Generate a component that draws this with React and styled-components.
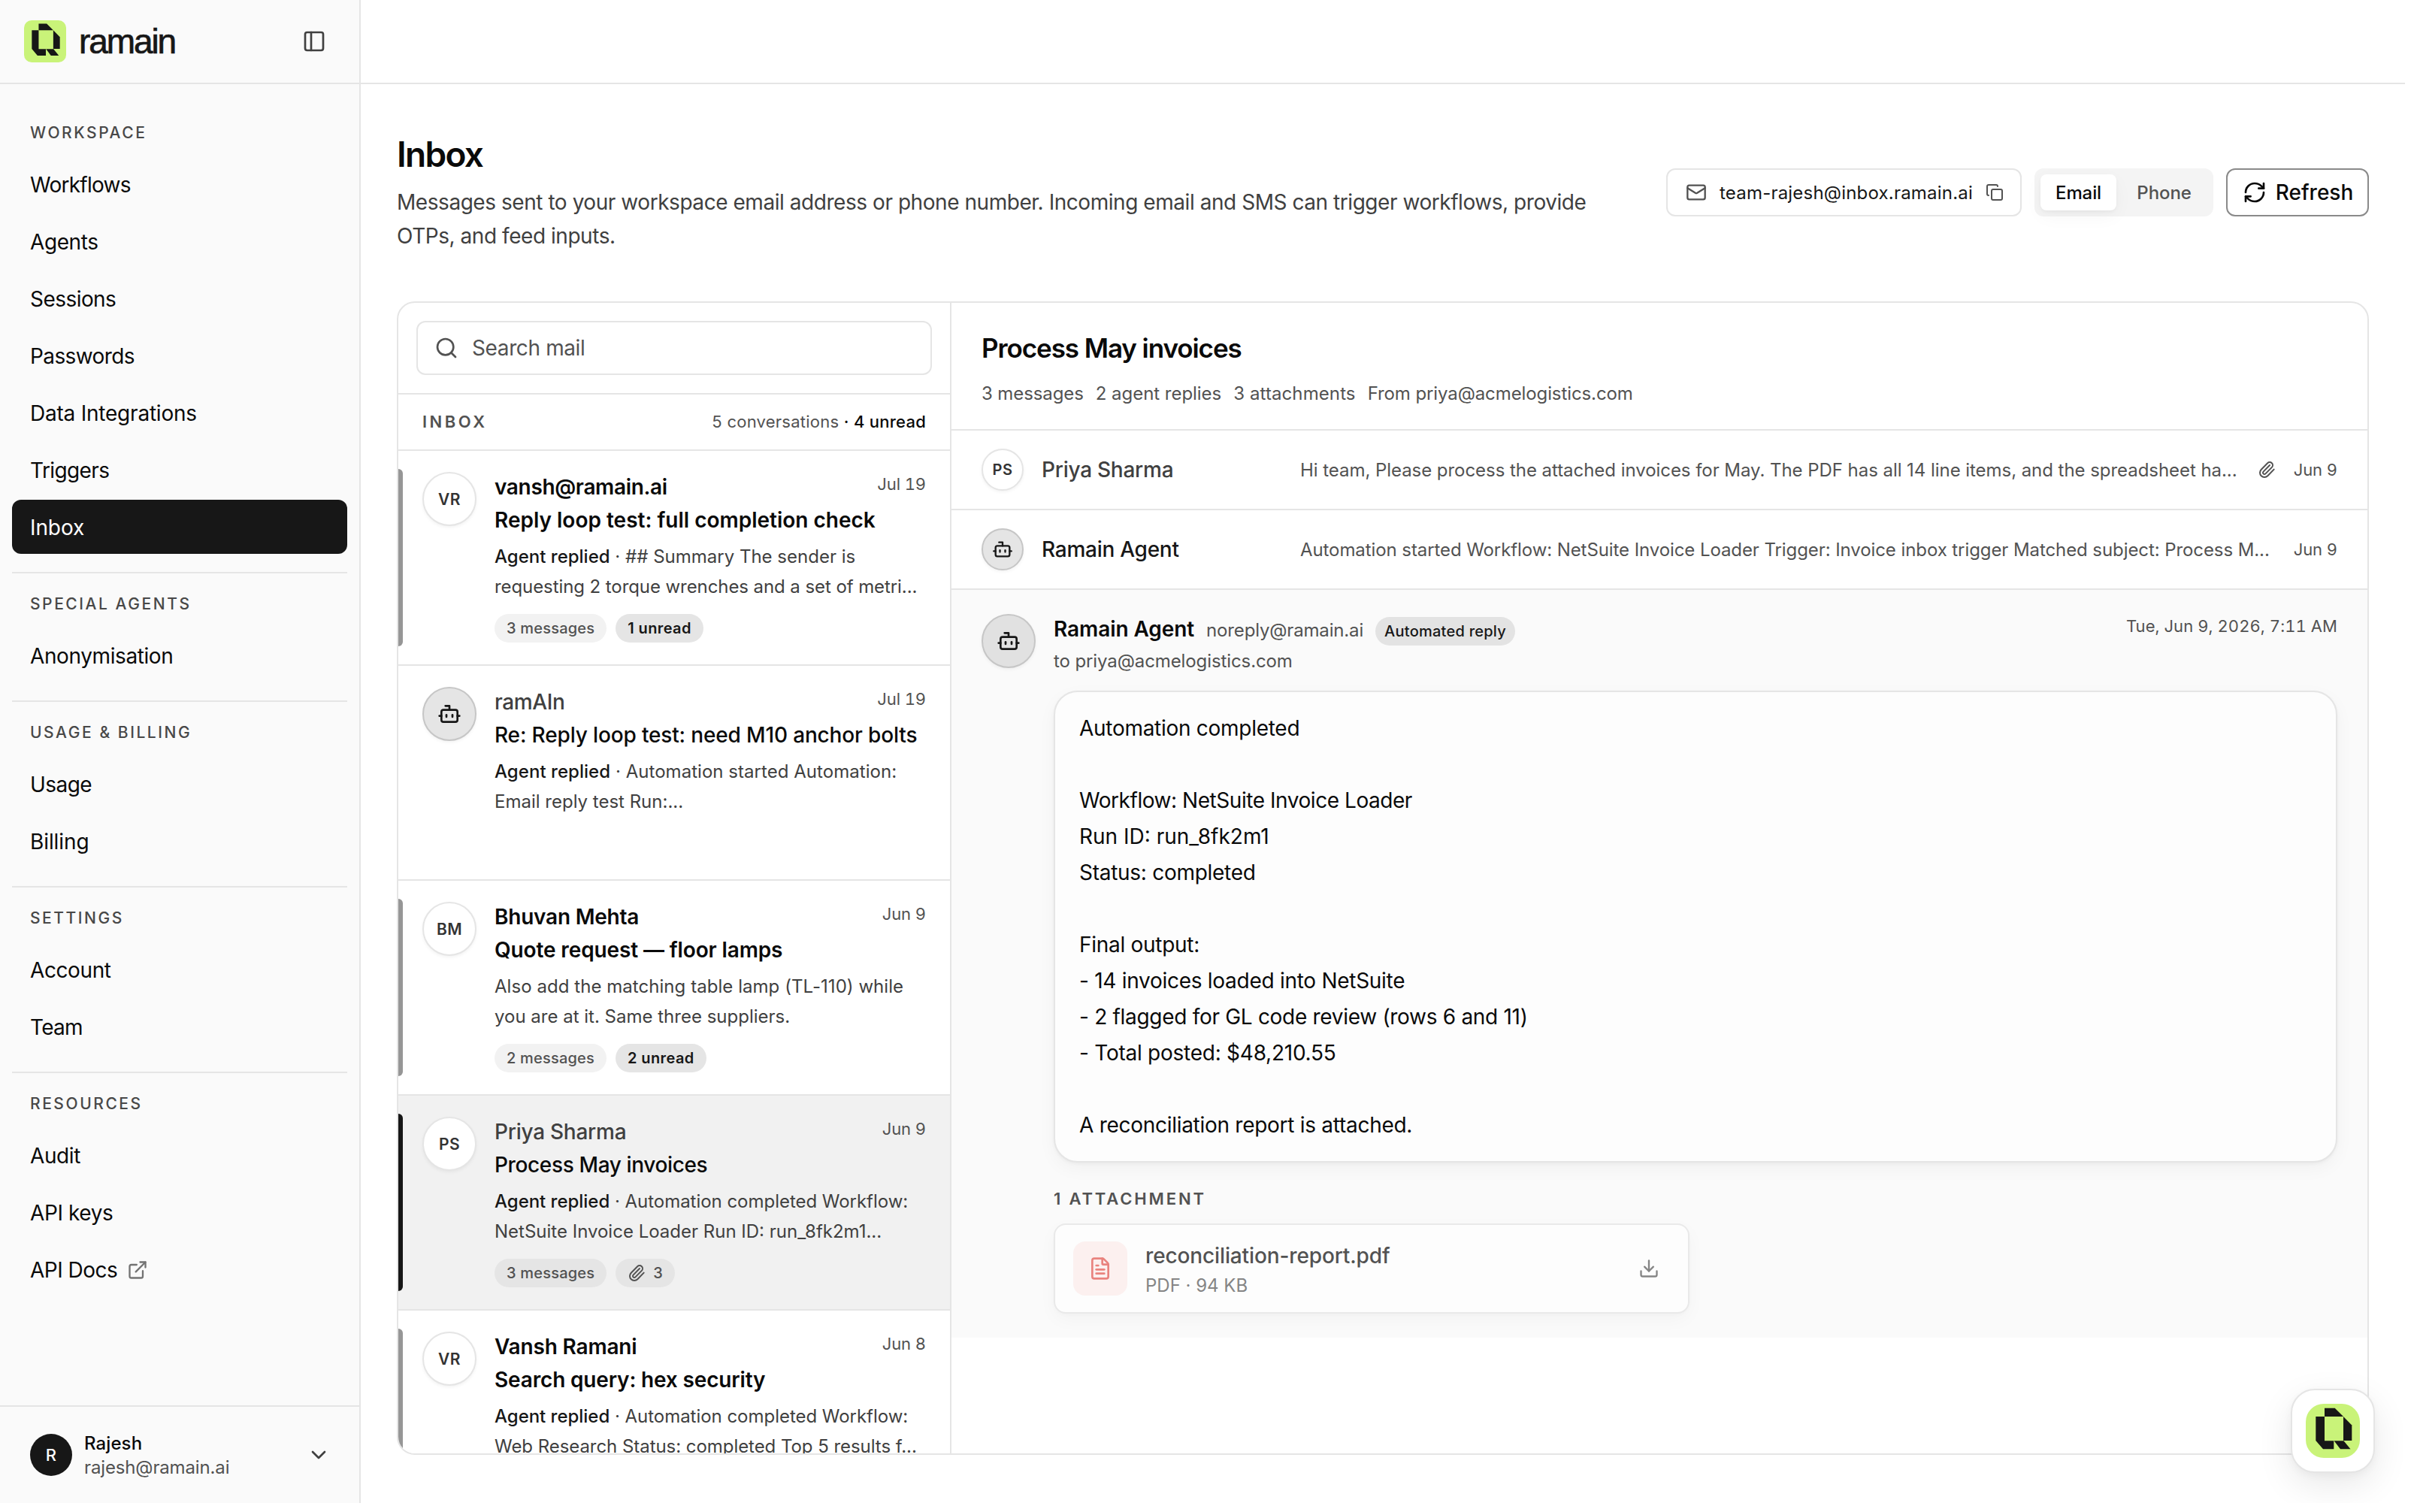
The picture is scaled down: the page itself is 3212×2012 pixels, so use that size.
import React, { useState } from 'react'
import styled, { createGlobalStyle } from 'styled-components'
import {
  Bot,
  ChevronDown,
  Copy,
  Download,
  ExternalLink,
  FileText,
  Mail,
  PanelLeft,
  Paperclip,
  RefreshCw,
  Search,
} from 'lucide-react'

const GlobalStyle = createGlobalStyle`
  * { box-sizing: border-box; }
  body {
    margin: 0;
    background: #ffffff;
    color: #0a0a0a;
    font-family: "Inter", "Liberation Sans", sans-serif;
    -webkit-font-smoothing: antialiased;
  }
  button { font-family: inherit; border: none; background: none; padding: 0; }
  svg { display: block; flex-shrink: 0; }
`

const Page = styled.div`
  position: relative;
  display: flex;
  width: 3200px;
  height: 2000px;
  overflow: hidden;
  white-space: nowrap;
`

// Sidebar
const Sidebar = styled.aside`
  display: flex;
  flex-direction: column;
  width: 480px;
  flex-shrink: 0;
  background: #fafafa;
  border-right: 2px solid #e5e5e5;
`

const Brand = styled.div`
  display: flex;
  align-items: center;
  height: 112px;
  padding: 0 44px 0 32px;
  border-bottom: 2px solid #e5e5e5;
  color: #404040;
`

const BrandName = styled.span`
  flex: 1;
  margin-left: 17px;
  font-family: "Liberation Sans", Arial, sans-serif;
  font-size: 46px;
  line-height: 48px;
  letter-spacing: -2.1px;
  -webkit-text-stroke: 0.7px #171717;
  color: #171717;
`

const Nav = styled.nav`
  flex: 1;
  padding: 24px 16px 0;
`

const NavSection = styled.div`
  padding-top: 24px;

  & + & {
    margin-top: 24px;
    border-top: 2px solid #e5e5e5;
  }
`

const NavLabel = styled.div`
  height: 33px;
  margin-bottom: 16px;
  padding-left: 24px;
  font-size: 21px;
  font-weight: 500;
  line-height: 33px;
  letter-spacing: 2.55px;
  color: #484848;
`

const NavItem = styled.div`
  display: flex;
  align-items: center;
  gap: 13px;
  height: 72px;
  padding: 1px 24px 0;
  border-radius: 12px;
  font-size: 28px;
  letter-spacing: ${({ $tracking }) => $tracking ?? -0.4}px;
  color: ${({ $active }) => ($active ? '#ffffff' : '#0a0a0a')};
  background: ${({ $active }) => ($active ? '#171717' : 'transparent')};

  & + & { margin-top: 4px; }
  svg { color: #737373; }
`

const Account = styled.div`
  display: flex;
  align-items: center;
  height: 130px;
  padding: 0 38px 0 40px;
  border-top: 2px solid #e5e5e5;
  color: #404040;
`

const AccountBadge = styled.div`
  width: 56px;
  height: 56px;
  border-radius: 50%;
  background: #171717;
  color: #ffffff;
  font-size: 22px;
  font-weight: 500;
  line-height: 56px;
  text-align: center;
`

const AccountText = styled.div`
  flex: 1;
  margin-left: 16px;
  padding-top: 1px;
  font-size: 24px;
  line-height: 32px;
  letter-spacing: -0.14px;
  color: #525252;

  strong {
    display: block;
    font-weight: 500;
    letter-spacing: 0.1px;
    color: #0a0a0a;
  }
`

// Main column
const Main = styled.main`
  display: flex;
  flex-direction: column;
  flex: 1;
  min-width: 0;
`

const TopBar = styled.div`
  height: 112px;
  border-bottom: 2px solid #e5e5e5;
`

const Content = styled.div`
  display: flex;
  flex-direction: column;
  flex: 1;
  padding: 65px 48px 64px;
`

const PageHead = styled.header`
  display: flex;
  justify-content: space-between;
  height: 224px;
`

const Heading = styled.h1`
  margin: 0;
  font-size: 46px;
  font-weight: 600;
  line-height: 56px;
  letter-spacing: -1.7px;
`

const Intro = styled.p`
  margin: 14px 0 0;
  width: 1610px;
  font-size: 28px;
  line-height: 45px;
  letter-spacing: -0.45px;
  white-space: normal;
  color: #404040;
`

const Actions = styled.div`
  display: flex;
  gap: 17px;
  height: 64px;
  margin-top: 47px;
`

const Address = styled.div`
  display: flex;
  align-items: center;
  justify-content: space-between;
  width: 473px;
  padding: 0 22px 0 24px;
  border: 2px solid #e5e5e5;
  border-radius: 12px;
  font-size: 24px;
  letter-spacing: 0.2px;
  color: #171717;

  svg { color: #525252; }
`

const Tabs = styled.div`
  display: flex;
  gap: 6px;
  width: 238px;
  padding: 8px;
  border-radius: 12px;
  background: #f4f4f4;
`

const Tab = styled.button`
  width: ${({ $active }) => ($active ? 102 : 116)}px;
  border-radius: 8px;
  font-size: 24px;
  font-weight: 500;
  letter-spacing: -0.1px;
  color: ${({ $active }) => ($active ? '#0a0a0a' : '#525252')};
  background: ${({ $active }) => ($active ? '#ffffff' : 'transparent')};
  box-shadow: ${({ $active }) => ($active ? '0 2px 4px rgba(0,0,0,.04), 0 8px 24px rgba(0,0,0,.04)' : 'none')};
`

const RefreshButton = styled.button`
  display: flex;
  align-items: center;
  justify-content: center;
  gap: 12px;
  width: 190px;
  padding-left: 1px;
  border: 2px solid #8a8a8a;
  border-radius: 12px;
  font-size: 28px;
  font-weight: 500;
  color: #0a0a0a;
`

const Mailbox = styled.section`
  display: flex;
  height: 1535px;
  border: 2px solid #e5e5e5;
  border-radius: 24px;
  overflow: hidden;
`

// Conversation list
const ListPane = styled.div`
  width: 736px;
  flex-shrink: 0;
  border-right: 2px solid #e5e5e5;
`

const SearchWrap = styled.div`
  padding: 24px;
  height: 122px;
  border-bottom: 2px solid #e5e5e5;
`

const SearchBox = styled.div`
  display: flex;
  align-items: center;
  gap: 18px;
  height: 72px;
  padding: 0 22px;
  border: 2px solid #e5e5e5;
  border-radius: 12px;
  font-size: 28px;
  letter-spacing: -0.38px;
  color: #525252;
`

const ListHead = styled.div`
  display: flex;
  align-items: center;
  justify-content: space-between;
  height: 75px;
  padding: 0 32px 2px;
  border-bottom: 2px solid #e5e5e5;
`

const Caps = styled.span`
  font-size: 22px;
  font-weight: 600;
  letter-spacing: ${({ $tracking }) => $tracking}px;
  color: #525252;
`

const Counts = styled.span`
  font-size: 22px;
  letter-spacing: 0.25px;
  color: #525252;

  b {
    font-weight: 500;
    color: #0a0a0a;
  }
`

const Conversation = styled.article`
  display: flex;
  gap: 24px;
  position: relative;
  height: 286px;
  padding: 28px 32px 0;
  border-bottom: 2px solid #e5e5e5;
  background: ${({ $active }) => ($active ? '#f1f1f1' : '#ffffff')};

  // marker on the left edge
  &::before {
    content: '';
    display: ${({ $active, $unread }) => ($active || $unread ? 'block' : 'none')};
    position: absolute;
    left: 0;
    top: 24px;
    bottom: 24px;
    width: 6px;
    border-radius: 0 6px 6px 0;
    background: ${({ $active }) => ($active ? '#171717' : '#969696')};
  }
`

const Avatar = styled.div`
  display: flex;
  align-items: center;
  justify-content: center;
  flex-shrink: 0;
  width: ${({ $size }) => $size}px;
  height: ${({ $size }) => $size}px;
  border: 2px solid ${({ $agent }) => ($agent ? '#c6c6c6' : '#e5e5e5')};
  border-radius: 50%;
  background: ${({ $agent }) => $agent || '#ffffff'};
  box-shadow: 0 2px 4px rgba(0, 0, 0, 0.05);
  font-size: ${({ $size }) => ($size > 60 ? 21 : 20)}px;
  font-weight: 600;
  letter-spacing: 0.5px;
  color: ${({ $agent }) => ($agent ? '#171717' : '#333333')};
`

const ConversationBody = styled.div`
  flex: 1;
  min-width: 0;
`

const NameLine = styled.div`
  display: flex;
  justify-content: space-between;
  height: 40px;
  font-size: 28px;
  font-weight: ${({ $unread }) => ($unread ? 600 : 500)};
  line-height: 40px;
  letter-spacing: ${({ $tracking }) => $tracking || 0}px;
  color: ${({ $unread }) => ($unread ? '#0a0a0a' : '#404040')};
`

const DateText = styled.time`
  font-size: 22px;
  font-weight: 400;
  line-height: 33px;
  letter-spacing: ${({ $tracking }) => $tracking ?? -0.1}px;
  font-variant-numeric: tabular-nums;
  color: #525252;
`

const Subject = styled.div`
  margin-top: 4px;
  font-size: 28px;
  font-weight: ${({ $unread }) => ($unread ? 600 : 500)};
  line-height: 40px;
  letter-spacing: ${({ $tracking }) => $tracking || 0}px;
`

const Snippet = styled.div`
  margin-top: 9px;
  height: 80px;
  font-size: 24px;
  line-height: 40px;
  color: #404040;

  b {
    font-weight: 500;
    color: #171717;
  }
`

const SnippetLine = styled.div`
  letter-spacing: ${({ $tracking }) => $tracking || 0}px;
`

const Pills = styled.div`
  display: flex;
  gap: 12px;
  margin-top: 16px;
`

const Pill = styled.span`
  display: flex;
  align-items: center;
  gap: 10px;
  height: 38px;
  padding: 0 16px;
  border-radius: 19px;
  font-size: 20px;
  font-weight: ${({ $strong }) => ($strong ? 600 : 500)};
  letter-spacing: ${({ $strong }) => ($strong ? 0.4 : 0.2)}px;
  color: ${({ $strong }) => ($strong ? '#171717' : '#525252')};
  background: ${({ $tone }) => $tone || '#f2f2f2'};
`

// Thread
const ThreadPane = styled.div`
  flex: 1;
  min-width: 0;
`

const ThreadHead = styled.div`
  height: 170px;
  padding: 38px 40px 0;
  border-bottom: 2px solid #e5e5e5;
`

const ThreadTitle = styled.h2`
  margin: 0;
  font-size: 35px;
  font-weight: 600;
  line-height: 44px;
  letter-spacing: -1.08px;
`

const ThreadMeta = styled.div`
  display: flex;
  gap: 16px;
  margin-top: 22px;
  font-size: 24px;
  line-height: 34px;
  letter-spacing: -0.1px;
  color: #525252;

  span:nth-child(2) { letter-spacing: -0.04px; }
  span:nth-child(3) { letter-spacing: 0.1px; }
`

const MessageRow = styled.div`
  display: flex;
  align-items: center;
  gap: 24px;
  height: 106px;
  padding: 0 40px;
  border-bottom: 2px solid #e5e5e5;
  color: #525252;
`

const RowName = styled.span`
  width: 320px;
  font-size: 28px;
  font-weight: 500;
  letter-spacing: ${({ $tracking }) => $tracking}px;
  color: ${({ $agent }) => ($agent ? '#171717' : '#404040')};
`

const Preview = styled.span`
  flex: 1;
  min-width: 0;
  font-size: 24px;
  letter-spacing: ${({ $tracking }) => $tracking}px;
`

const Expanded = styled.div`
  display: flex;
  gap: 24px;
  padding: 32px 40px;
  background: #fafafa;
`

const Message = styled.div`
  flex: 1;
  min-width: 0;
`

const MessageHead = styled.div`
  display: flex;
  align-items: baseline;
  height: 43px;
  font-size: 24px;
  line-height: 41px;
  letter-spacing: -0.16px;
  color: #525252;

  strong {
    margin-right: 16px;
    font-size: 28px;
    font-weight: 600;
    letter-spacing: -0.08px;
    color: #0a0a0a;
  }
  ${Pill} {
    align-self: flex-start;
    margin: 4px auto 0 16px;
    padding: 0 12px;
    font-weight: 500;
    letter-spacing: 0.25px;
    line-height: 38px;
  }
  ${DateText} {
    align-self: flex-start;
  }
`

const Recipient = styled.div`
  height: 59px;
  font-size: 24px;
  line-height: 39px;
  letter-spacing: -0.1px;
  color: #525252;
`

const MessageCard = styled.div`
  padding: 24px 32px;
  height: 628px;
  border: 2px solid #e5e5e5;
  border-radius: 32px;
  background: #fdfdfd;
  box-shadow: 0 2px 4px rgba(0, 0, 0, 0.04), 0 8px 24px rgba(0, 0, 0, 0.04);
  font-size: 28px;
  line-height: 48px;
`

const MessageLine = styled.div`
  min-height: 48px;
  letter-spacing: ${({ $tracking }) => $tracking ?? -0.28}px;
`

const AttachmentLabel = styled.div`
  height: 81px;
  padding-top: 31px;
  line-height: 34px;
`

const AttachmentCard = styled.div`
  display: flex;
  align-items: center;
  gap: 24px;
  width: 846px;
  height: 120px;
  padding: 0 38px 0 24px;
  border: 2px solid #e9e9e9;
  border-radius: 16px;
  background: #fdfdfd;
  box-shadow: 0 2px 4px rgba(0, 0, 0, 0.02), 0 8px 24px rgba(0, 0, 0, 0.03);
  color: #858585;
`

const FileBadge = styled.div`
  display: flex;
  align-items: center;
  justify-content: center;
  width: 72px;
  height: 72px;
  border-radius: 16px;
  background: #fcf0ef;
  color: #e9837e;
`

const FileInfo = styled.div`
  flex: 1;
  padding-top: 5px;
  font-size: 24px;
  line-height: 40px;
  color: #858585;

  strong {
    display: block;
    font-size: 28px;
    font-weight: 500;
    letter-spacing: -0.13px;
    color: #525252;
  }
`

const HelpButton = styled.button`
  display: flex;
  align-items: center;
  justify-content: center;
  position: absolute;
  right: 40px;
  bottom: 40px;
  width: 112px;
  height: 112px;
  border: 2px solid #e5e5e5;
  border-radius: 32px;
  background: #ffffff;
  box-shadow: 0 4px 12px rgba(0, 0, 0, 0.04), 0 16px 48px rgba(0, 0, 0, 0.09);
`

function Logo({ size, radius }) {
  return (
    <svg width={size} height={size} viewBox="0 0 72 72">
      <rect width="72" height="72" rx={radius} fill="#c9f379" />
      <g fill="#171717">
        <path d="M25 5.8h13.7L50 17H25z" />
        <path d="M13.3 17H25v32.2h12.3v11.1H23L13.3 49z" />
        <path d="M50 17l11.3 11.5V49H50z" />
        <path d="M37.6 49.2H50.4l9.1 11.1H46z" />
      </g>
    </svg>
  )
}

const navSections = [
  {
    label: 'WORKSPACE',
    items: [
      { name: 'Workflows', tracking: -0.75 },
      { name: 'Agents' },
      { name: 'Sessions', tracking: -0.55 },
      { name: 'Passwords', tracking: -0.6 },
      { name: 'Data Integrations', tracking: -0.22 },
      { name: 'Triggers', tracking: -0.6 },
      { name: 'Inbox', tracking: -0.1 },
    ],
  },
  { label: 'SPECIAL AGENTS', items: [{ name: 'Anonymisation' }] },
  { label: 'USAGE & BILLING', items: [{ name: 'Usage', tracking: -0.55 }, { name: 'Billing', tracking: -0.1 }] },
  { label: 'SETTINGS', items: [{ name: 'Account' }, { name: 'Team', tracking: -0.7 }] },
  { label: 'RESOURCES', items: [{ name: 'Audit' }, { name: 'API keys' }, { name: 'API Docs', tracking: -0.5, external: true }] },
]

const conversations = [
  {
    id: 1, initials: 'VR', name: 'vansh@ramain.ai', nameTracking: -0.34, date: 'Jul 19',
    subject: 'Reply loop test: full completion check', replied: true,
    lines: ['## Summary The sender is', 'requesting 2 torque wrenches and a set of metri...'],
    lineTracking: [0, -0.08], messages: 3, unread: 1,
  },
  {
    id: 2, agent: true, name: 'ramAIn', nameTracking: -0.4, date: 'Jul 19',
    subject: 'Re: Reply loop test: need M10 anchor bolts', subjectTracking: -0.15, replied: true,
    lines: ['Automation started Automation:', 'Email reply test Run:...'],
    lineTracking: [0.04, 0],
  },
  {
    id: 3, initials: 'BM', name: 'Bhuvan Mehta', nameTracking: -0.22, date: 'Jun 9',
    subject: 'Quote request — floor lamps', subjectTracking: -0.12,
    lines: ['Also add the matching table lamp (TL-110) while', 'you are at it. Same three suppliers.'],
    lineTracking: [0.05, 0], messages: 2, unread: 2,
  },
  {
    id: 4, initials: 'PS', name: 'Priya Sharma', nameTracking: -0.25, date: 'Jun 9',
    subject: 'Process May invoices', subjectTracking: -0.37, replied: true,
    lines: ['Automation completed Workflow:', 'NetSuite Invoice Loader Run ID: run_8fk2m1...'],
    lineTracking: [-0.03, 0], messages: 3, files: 3,
  },
  {
    id: 5, initials: 'VR', name: 'Vansh Ramani', nameTracking: -0.17, date: 'Jun 8', isNew: true,
    subject: 'Search query: hex security', subjectTracking: -0.16, replied: true,
    lines: ['Automation completed Workflow:', 'Web Research Status: completed Top 5 results f...'],
    lineTracking: [-0.03, -0.05],
  },
]

const messageLines = [
  { text: 'Automation completed' },
  { text: '' },
  { text: 'Workflow: NetSuite Invoice Loader', tracking: -0.45 },
  { text: 'Run ID: run_8fk2m1', tracking: 0 },
  { text: 'Status: completed' },
  { text: '' },
  { text: 'Final output:' },
  { text: '- 14 invoices loaded into NetSuite' },
  { text: '- 2 flagged for GL code review (rows 6 and 11)', tracking: -0.3 },
  { text: '- Total posted: $48,210.55', tracking: -0.25 },
  { text: '' },
  { text: 'A reconciliation report is attached.' },
]

function App() {
  const [selected, setSelected] = useState(4)
  const [channel, setChannel] = useState('Email')

  return (
    <Page>
      <GlobalStyle />
      <Sidebar>
        <Brand>
          <Logo size={56} radius={13} />
          <BrandName>ramain</BrandName>
          <PanelLeft size={32} />
        </Brand>
        <Nav>
          {navSections.map((section) => (
            <NavSection key={section.label}>
              <NavLabel>{section.label}</NavLabel>
              {section.items.map((item) => (
                <NavItem key={item.name} $active={item.name === 'Inbox'} $tracking={item.tracking}>
                  {item.name}
                  {item.external && <ExternalLink size={28} />}
                </NavItem>
              ))}
            </NavSection>
          ))}
        </Nav>
        <Account>
          <AccountBadge>R</AccountBadge>
          <AccountText>
            <strong>Rajesh</strong>
            rajesh@ramain.ai
          </AccountText>
          <ChevronDown size={32} />
        </Account>
      </Sidebar>

      <Main>
        <TopBar />
        <Content>
          <PageHead>
            <div>
              <Heading>Inbox</Heading>
              <Intro>
                Messages sent to your workspace email address or phone number. Incoming email and SMS can
                trigger workflows, provide OTPs, and feed inputs.
              </Intro>
            </div>
            <Actions>
              <Address>
                <Mail size={28} />
                team-rajesh@inbox.ramain.ai
                <Copy size={24} />
              </Address>
              <Tabs>
                {['Email', 'Phone'].map((name) => (
                  <Tab key={name} $active={name === channel} onClick={() => setChannel(name)}>{name}</Tab>
                ))}
              </Tabs>
              <RefreshButton>
                <RefreshCw size={32} />
                Refresh
              </RefreshButton>
            </Actions>
          </PageHead>

          <Mailbox>
            <ListPane>
              <SearchWrap>
                <SearchBox>
                  <Search size={32} />
                  Search mail
                </SearchBox>
              </SearchWrap>
              <ListHead>
                <Caps $tracking={3.5}>INBOX</Caps>
                <Counts>5 conversations <b>· 4 unread</b></Counts>
              </ListHead>

              {conversations.map((c) => {
                const active = c.id === selected
                const unread = Boolean(c.unread || c.isNew)
                return (
                  <Conversation key={c.id} $active={active} $unread={unread} onClick={() => setSelected(c.id)}>
                    <Avatar $size={72} $agent={c.agent && '#e5e5e5'}>
                      {c.agent ? <Bot size={32} /> : c.initials}
                    </Avatar>
                    <ConversationBody>
                      <NameLine $unread={unread} $tracking={c.nameTracking}>
                        {c.name}
                        <DateText>{c.date}</DateText>
                      </NameLine>
                      <Subject $unread={unread} $tracking={c.subjectTracking}>{c.subject}</Subject>
                      <Snippet>
                        {c.lines.map((line, i) => (
                          <SnippetLine key={line} $tracking={c.lineTracking[i]}>
                            {i === 0 && c.replied && <><b>Agent replied</b> · </>}
                            {line}
                          </SnippetLine>
                        ))}
                      </Snippet>
                      {c.messages && (
                        <Pills>
                          <Pill $tone={active ? '#e5e5e5' : '#f2f2f2'}>{c.messages} messages</Pill>
                          {c.unread && <Pill $strong $tone="#e5e5e5">{c.unread} unread</Pill>}
                          {c.files && <Pill $tone="#e5e5e5"><Paperclip size={24} />{c.files}</Pill>}
                        </Pills>
                      )}
                    </ConversationBody>
                  </Conversation>
                )
              })}
            </ListPane>

            <ThreadPane>
              <ThreadHead>
                <ThreadTitle>Process May invoices</ThreadTitle>
                <ThreadMeta>
                  <span>3 messages</span>
                  <span>2 agent replies</span>
                  <span>3 attachments</span>
                  <span>From priya@acmelogistics.com</span>
                </ThreadMeta>
              </ThreadHead>

              <MessageRow>
                <Avatar $size={56}>PS</Avatar>
                <RowName $tracking={-0.25}>Priya Sharma</RowName>
                <Preview $tracking={-0.05}>
                  Hi team, Please process the attached invoices for May. The PDF has all 14 line items, and the spreadsheet ha...
                </Preview>
                <Paperclip size={24} />
                <DateText>Jun 9</DateText>
              </MessageRow>
              <MessageRow>
                <Avatar $size={56} $agent="#e5e5e5"><Bot size={28} /></Avatar>
                <RowName $agent $tracking={-0.26}>Ramain Agent</RowName>
                <Preview $tracking={-0.085}>
                  Automation started Workflow: NetSuite Invoice Loader Trigger: Invoice inbox trigger Matched subject: Process M...
                </Preview>
                <DateText>Jun 9</DateText>
              </MessageRow>

              <Expanded>
                <Avatar $size={72} $agent="#e1e1e1"><Bot size={32} /></Avatar>
                <Message>
                  <MessageHead>
                    <strong>Ramain Agent</strong>
                    noreply@ramain.ai
                    <Pill $strong $tone="#e3e3e3">Automated reply</Pill>
                    <DateText $tracking={0.07}>Tue, Jun 9, 2026, 7:11 AM</DateText>
                  </MessageHead>
                  <Recipient>to priya@acmelogistics.com</Recipient>
                  <MessageCard>
                    {messageLines.map((line, i) => (
                      <MessageLine key={i} $tracking={line.tracking}>{line.text}</MessageLine>
                    ))}
                  </MessageCard>
                  <AttachmentLabel><Caps $tracking={2.85}>1 ATTACHMENT</Caps></AttachmentLabel>
                  <AttachmentCard>
                    <FileBadge><FileText size={32} /></FileBadge>
                    <FileInfo>
                      <strong>reconciliation-report.pdf</strong>
                      PDF · 94 KB
                    </FileInfo>
                    <Download size={28} />
                  </AttachmentCard>
                </Message>
              </Expanded>
            </ThreadPane>
          </Mailbox>
        </Content>
      </Main>

      <HelpButton aria-label="Open assistant">
        <Logo size={72} radius={24} />
      </HelpButton>
    </Page>
  )
}

export default App
